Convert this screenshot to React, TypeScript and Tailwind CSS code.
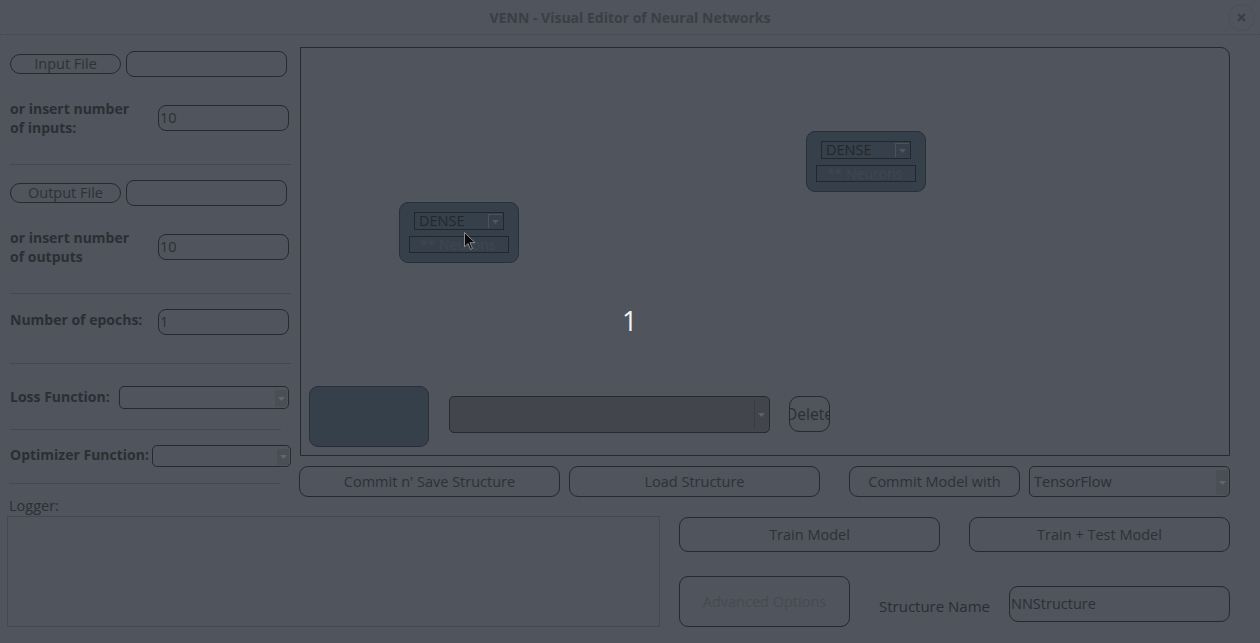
import React from "react";

const F = { fontFamily: '"Open Sans", "Liberation Sans", sans-serif' };

function Btn({ children, className = "" }: { children?: React.ReactNode; className?: string }) {
  return (
    <div
      className={
        "flex items-center justify-center border border-[#26292e] text-[14.5px] text-[#2e3137] whitespace-nowrap overflow-hidden " +
        className
      }
    >
      {children}
    </div>
  );
}

function Field({ value = "", className = "" }: { value?: string; className?: string }) {
  return (
    <div
      className={
        "flex items-center border border-[#26292e] rounded-[8px] text-[14.5px] text-[#2c2f35] pl-[1px] " + className
      }
    >
      {value}
    </div>
  );
}

function Combo({ className = "" }: { className?: string }) {
  return (
    <div className={"relative border border-[#26292e] rounded-[5px] " + className}>
      <div className="absolute right-[1px] top-[3px] bottom-[1px] w-[12px] bg-[#4a4e55] flex items-center justify-center rounded-br-[4px]">
        <svg width="7" height="4" viewBox="0 0 7 4">
          <path d="M0 0 L7 0 L3.5 4 Z" fill="#62666d" />
        </svg>
      </div>
    </div>
  );
}

function Sep({ w = 281 }: { w?: number }) {
  return <div className="h-px bg-[#45484f]" style={{ width: w }} />;
}

function Node({ className = "" }: { className?: string }) {
  return (
    <div
      className={
        "absolute w-[120px] h-[61px] bg-[#36404a] border border-[#2a2f36] rounded-[9px] flex flex-col " + className
      }
    >
      <div className="ml-[14px] mt-[9px] w-[90px] h-[18px] border border-[#23272d] flex items-center">
        <span className="pl-[4px] text-[14.5px] leading-none text-[#23272d] flex-1">DENSE</span>
        <div className="w-[14px] h-[14px] mr-[1px] border-l border-t border-[#4a525c] flex items-center justify-center">
          <svg width="7" height="4" viewBox="0 0 7 4">
            <path d="M0 0 L7 0 L3.5 4 Z" fill="#4f5862" />
          </svg>
        </div>
      </div>
      <div className="ml-[9px] mt-[6px] w-[100px] h-[17px] border border-[#23272d] flex items-center pl-[10px] text-[14px] leading-none text-[#3f4752] whitespace-nowrap overflow-hidden">
        ** Neurons
      </div>
    </div>
  );
}

export default function App() {
  return (
    <div className="w-[1260px] h-[643px] bg-[#50545c] overflow-hidden flex flex-col" style={F}>
      {/* title bar */}
      <div className="relative h-[35px] shrink-0 flex items-center justify-center border-b border-dotted border-[#44474e]">
        <span className="text-[14px] font-bold text-[#3b3e45]">VENN - Visual Editor of Neural Networks</span>
        <div className="absolute right-[5px] top-[4px] w-[27px] h-[27px] rounded-full border border-dotted border-[#484b52] flex items-center justify-center">
          <svg width="9" height="9" viewBox="0 0 9 9">
            <path d="M1 1 L8 8 M8 1 L1 8" stroke="#3a3d43" strokeWidth="2" />
          </svg>
        </div>
      </div>

      {/* row A */}
      <div className="flex h-[462px] shrink-0">
        {/* left column */}
        <div className="w-[299px] shrink-0 flex flex-col pl-[10px]">
          <div className="mt-[16px] h-[26px] flex items-center">
            <Btn className="w-[111px] h-[20px] rounded-full">Input File</Btn>
            <Field className="ml-[5px] w-[161px] h-[26px]" />
          </div>
          <div className="mt-[21px] h-[39px] flex items-center">
            <div className="w-[148px] text-[14px] font-bold leading-[19px] text-[#2b2e34]">
              or insert number
              <br />
              of inputs:
            </div>
            <Field value="10" className="w-[131px] h-[26px]" />
          </div>
          <div className="mt-[27px]">
            <Sep w={281} />
          </div>
          <div className="mt-[15px] h-[26px] flex items-center">
            <Btn className="w-[111px] h-[20px] rounded-full">Output File</Btn>
            <Field className="ml-[5px] w-[161px] h-[26px]" />
          </div>
          <div className="mt-[21px] h-[39px] flex items-center">
            <div className="w-[148px] text-[14px] font-bold leading-[19px] text-[#2b2e34]">
              or insert number
              <br />
              of outputs
            </div>
            <Field value="10" className="w-[131px] h-[26px]" />
          </div>
          <div className="mt-[27px]">
            <Sep w={281} />
          </div>
          <div className="mt-[15px] h-[26px] flex items-center">
            <div className="w-[148px] text-[14px] font-bold text-[#2b2e34] -mt-[5px]">Number of epochs:</div>
            <Field value="1" className="w-[131px] h-[26px]" />
          </div>
          <div className="mt-[28px]">
            <Sep w={281} />
          </div>
          <div className="mt-[22px] h-[23px] flex items-center">
            <div className="w-[109px] text-[14px] font-bold text-[#2b2e34] -mt-[3px]">Loss Function:</div>
            <Combo className="w-[170px] h-[23px]" />
          </div>
          <div className="mt-[20px]">
            <Sep w={271} />
          </div>
          <div className="mt-[15px] h-[22px] flex items-center">
            <div className="w-[142px] text-[14px] font-bold text-[#2b2e34] -mt-[3px]">Optimizer Function:</div>
            <Combo className="w-[139px] h-[22px]" />
          </div>
          <div className="mt-[16px] -ml-[1px]">
            <Sep w={271} />
          </div>
        </div>

        {/* right column */}
        <div className="flex flex-col w-[931px]">
          <div className="mt-[12px] ml-[1px] w-[930px] h-[410px] border border-[#26292e] rounded-tr-[9px] flex flex-col">
            <div className="relative flex-1">
              <Node className="left-[98px] top-[154px]" />
              <Node className="left-[505px] top-[83px]" />
              <div className="absolute left-[321px] top-[259px] text-[27px] leading-none text-[#f2f2f2]">1</div>
              <svg className="absolute left-[163px] top-[184px]" width="12" height="19" viewBox="0 0 12 19">
                <path d="M0.5 0.5 L0.5 15 L4 11.5 L6.5 17.5 L8.5 16.5 L6 10.7 L11 10.7 Z" fill="#0b0c0e" stroke="#8a8c90" strokeWidth="1" />
              </svg>
            </div>
            <div className="flex items-start pl-[8px] pb-[8px]">
              <div className="w-[120px] h-[61px] bg-[#36404a] border border-[#2a2f36] rounded-[9px]" />
              <div className="relative ml-[20px] mt-[10px] w-[321px] h-[37px] bg-[#42454c] border border-[#26292e] rounded-[5px]">
                <div className="absolute right-[1px] top-[3px] bottom-[3px] w-[14px] border-l border-[#393c42] flex items-center justify-center">
                  <svg width="7" height="4" viewBox="0 0 7 4">
                    <path d="M0 0 L7 0 L3.5 4 Z" fill="#5e6169" />
                  </svg>
                </div>
              </div>
              <Btn className="ml-[19px] mt-[10px] w-[41px] h-[36px] rounded-[10px] pt-[2px] !text-[15.5px] !text-[#2b2e34]">
                <span className="shrink-0">Delete</span>
              </Btn>
            </div>
          </div>
          <div className="mt-[10px] h-[31px] flex">
            <Btn className="w-[261px] h-[31px] rounded-[9px]">Commit n' Save Structure</Btn>
            <Btn className="ml-[9px] w-[251px] h-[31px] rounded-[9px]">Load Structure</Btn>
            <Btn className="ml-[29px] w-[171px] h-[31px] rounded-[9px]">Commit Model with</Btn>
            <div className="relative ml-[9px] w-[201px] h-[31px] border border-[#26292e] rounded-[5px] flex items-center pl-[4px] text-[14.5px] text-[#2c2f35]">
              TensorFlow
              <div className="absolute right-[1px] top-[3px] bottom-[1px] w-[12px] bg-[#4a4e55] flex items-center justify-center rounded-br-[4px]">
                <svg width="7" height="4" viewBox="0 0 7 4">
                  <path d="M0 0 L7 0 L3.5 4 Z" fill="#62666d" />
                </svg>
              </div>
            </div>
          </div>
        </div>
      </div>

      {/* row B */}
      <div className="flex flex-1">
        <div className="w-[659px] shrink-0 pl-[7px] flex flex-col">
          <div className="h-[19px] leading-[18px] pl-[2px] text-[14.5px] text-[#2c2f35]">Logger:</div>
          <div className="w-[653px] h-[111px] border border-[#45484f]" />
        </div>
        <div className="ml-[20px] w-[551px] flex flex-col">
          <div className="mt-[20px] flex">
            <Btn className="w-[261px] h-[35px] rounded-[9px]">Train Model</Btn>
            <Btn className="ml-[29px] w-[261px] h-[35px] rounded-[9px]">Train + Test Model</Btn>
          </div>
          <div className="mt-[24px] flex items-start">
            <Btn className="w-[171px] h-[51px] rounded-[9px] !text-[#464a51]">Advanced Options</Btn>
            <div className="ml-[29px] mt-[19px] text-[15px] text-[#2a2d33] whitespace-nowrap">Structure Name</div>
            <Field value="NNStructure" className="ml-[19px] mt-[10px] w-[221px] h-[36px] rounded-[9px]" />
          </div>
        </div>
      </div>
    </div>
  );
}
